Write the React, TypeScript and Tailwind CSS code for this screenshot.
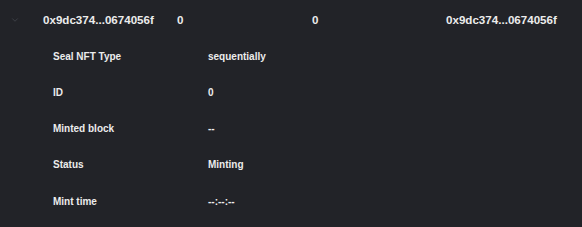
import { ChevronDown } from 'lucide-react';

const rows = [
  { label: 'Seal NFT Type', value: 'sequentially' },
  { label: 'ID', value: '0' },
  { label: 'Minted block', value: '--' },
  { label: 'Status', value: 'Minting' },
  { label: 'Mint time', value: '--:--:--' },
];

export default function App() {
  return (
    <div
      className="w-[582px] h-[227px] bg-[#222328] text-[#ececec] font-semibold overflow-hidden"
      style={{ fontFamily: '"Liberation Sans", Arial, sans-serif' }}
    >
      <div className="flex items-center h-[38px] pt-[2px] text-[11.6px]">
        <div className="w-[43px] pl-[10px] flex items-center">
          <ChevronDown size={10} strokeWidth={1.5} className="text-[#4d5058]" />
        </div>
        <div className="w-[134px]">0x9dc374...0674056f</div>
        <div className="w-[135px]">0</div>
        <div className="w-[134px]">0</div>
        <div>0x9dc374...0674056f</div>
      </div>
      <div className="flex flex-col text-[10px]">
        {rows.map((r) => (
          <div key={r.label} className="flex items-center h-[36.25px] pl-[53px]">
            <div className="w-[155px]">{r.label}</div>
            <div>{r.value}</div>
          </div>
        ))}
      </div>
    </div>
  );
}
